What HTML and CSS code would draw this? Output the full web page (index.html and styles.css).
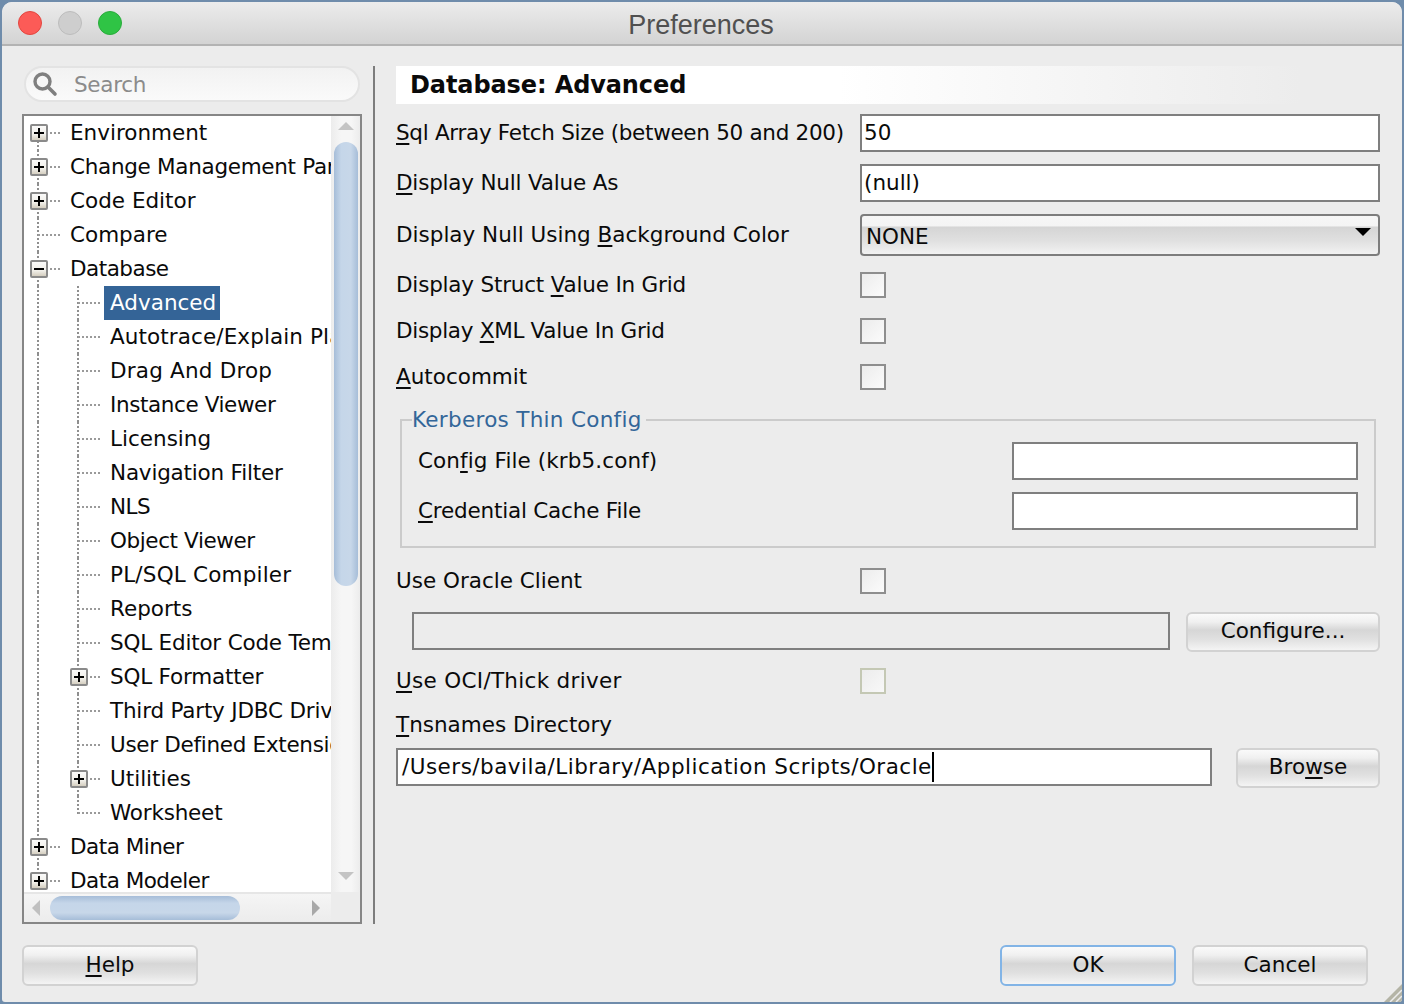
FILE: index.html
```html
<!DOCTYPE html>
<html lang="en">
<head>
<meta charset="utf-8">
<title>Preferences</title>
<link rel="stylesheet" href="styles.css">
</head>
<body>
<svg class="defs" width="0" height="0" aria-hidden="true">
  <defs>
    <linearGradient id="boxfill" x1="0" y1="0" x2="0" y2="1">
      <stop offset="0" stop-color="#fbfbfb"/><stop offset="0.6" stop-color="#f1efe9"/><stop offset="1" stop-color="#cfc8b8"/>
    </linearGradient>
    <symbol id="plus" viewBox="0 0 18 18">
      <rect x="1" y="1" width="16" height="16" rx="1" fill="url(#boxfill)" stroke="#8a8a8a" stroke-width="2"/>
      <path d="M4 9h10M9 4v10" stroke="#000" stroke-width="2"/>
    </symbol>
    <symbol id="minus" viewBox="0 0 18 18">
      <rect x="1" y="1" width="16" height="16" rx="1" fill="url(#boxfill)" stroke="#8a8a8a" stroke-width="2"/>
      <path d="M4 9h10" stroke="#000" stroke-width="2"/>
    </symbol>
  </defs>
</svg>
<div class="window">
  <header class="titlebar">
    <div class="lights"><span class="light red"></span><span class="light grey"></span><span class="light green"></span></div>
    <div class="title">Preferences</div>
  </header>
  <main class="main">
    <aside class="nav">
      <div class="search">
        <svg class="search-icon" width="26" height="26" viewBox="0 0 26 26"><circle cx="10.5" cy="10.5" r="7.5" fill="#f6f6f6" stroke="#7f7f7f" stroke-width="3.4"/><path d="M16 16l7 7" stroke="#7f7f7f" stroke-width="3.6" stroke-linecap="round"/></svg>
        <span class="search-text ls-3">Search</span>
      </div>
      <div class="tree">
        <div class="tree-view">
          <div class="row root first"><svg class="exp"><use href="#plus"/></svg><span class="node">Environment</span></div>
          <div class="row root"><svg class="exp"><use href="#plus"/></svg><span class="node ls-3">Change Management Parameters</span></div>
          <div class="row root"><svg class="exp"><use href="#plus"/></svg><span class="node">Code Editor</span></div>
          <div class="row root"><span class="node">Compare</span></div>
          <div class="row root"><svg class="exp"><use href="#minus"/></svg><span class="node ls-5">Database</span></div>
          <div class="row sub"><span class="node selected">Advanced</span></div>
          <div class="row sub"><span class="node lp-1">Autotrace/Explain Plan</span></div>
          <div class="row sub"><span class="node lp-2">Drag And Drop</span></div>
          <div class="row sub"><span class="node ls-4">Instance Viewer</span></div>
          <div class="row sub"><span class="node">Licensing</span></div>
          <div class="row sub"><span class="node ls-2">Navigation Filter</span></div>
          <div class="row sub"><span class="node ls-5">NLS</span></div>
          <div class="row sub"><span class="node ls-4">Object Viewer</span></div>
          <div class="row sub"><span class="node lp-2">PL/SQL Compiler</span></div>
          <div class="row sub"><span class="node">Reports</span></div>
          <div class="row sub"><span class="node ls-2">SQL Editor Code Templates</span></div>
          <div class="row sub"><svg class="exp"><use href="#plus"/></svg><span class="node ls-2">SQL Formatter</span></div>
          <div class="row sub"><span class="node ls-2">Third Party JDBC Drivers</span></div>
          <div class="row sub"><span class="node ls-3">User Defined Extensions</span></div>
          <div class="row sub"><svg class="exp"><use href="#plus"/></svg><span class="node">Utilities</span></div>
          <div class="row sub last"><span class="node ls-2">Worksheet</span></div>
          <div class="row root"><svg class="exp"><use href="#plus"/></svg><span class="node ls-5">Data Miner</span></div>
          <div class="row root"><svg class="exp"><use href="#plus"/></svg><span class="node ls-5">Data Modeler</span></div>
        </div>
        <div class="vbar">
          <span class="arrow up"></span>
          <span class="vthumb"></span>
          <span class="arrow down"></span>
        </div>
        <div class="hbar">
          <span class="arrow left"></span>
          <span class="hthumb"></span>
          <span class="arrow right"></span>
        </div>
        <div class="corner"></div>
      </div>
    </aside>
    <div class="divider"></div>
    <section class="panel">
      <h1 class="heading">Database: Advanced</h1>
      <div class="frow r1"><label class="lbl ls-3"><u>S</u>ql Array Fetch Size (between 50 and 200)</label><div class="field">50</div></div>
      <div class="frow r2"><label class="lbl ls-2"><u>D</u>isplay Null Value As</label><div class="field">(null)</div></div>
      <div class="frow r3"><label class="lbl">Display Null Using <u>B</u>ackground Color</label><div class="combo"><span>NONE</span><span class="caret-down"></span></div></div>
      <div class="frow r4"><label class="lbl ls-2">Display Struct <u>V</u>alue In Grid</label><span class="check"></span></div>
      <div class="frow r5"><label class="lbl ls-3">Display <u>X</u>ML Value In Grid</label><span class="check"></span></div>
      <div class="frow r5"><label class="lbl"><u>A</u>utocommit</label><span class="check"></span></div>
      <fieldset class="group">
        <legend class="legend lp-3">Kerberos Thin Config</legend>
        <div class="grow"><label class="glbl lp-1"><span>Con<u>f</u>ig File (krb5.conf)</span></label><div class="field"></div></div>
        <div class="grow g2"><label class="glbl ls-2"><u>C</u>redential Cache File</label><div class="field"></div></div>
      </fieldset>
      <div class="frow r6"><label class="lbl"><span>Use Oracle Client</span></label><span class="check"></span></div>
      <div class="frow r7"><div class="field disabled"></div><button class="btn cfg">Configure...</button></div>
      <div class="frow r8"><label class="lbl lp-3"><u>U</u>se OCI/Thick driver</label><span class="check off"></span></div>
      <div class="tns-label"><u>T</u>nsnames Directory</div>
      <div class="frow r9"><div class="field tns"><span class="typed">/Users/bavila/Library/Application Scripts/Oracle</span></div><button class="btn browse">Bro<u>w</u>se</button></div>
    </section>
  </main>
  <footer class="footer">
    <button class="btn help"><u>H</u>elp</button>
    <div class="actions">
      <button class="btn ok">OK</button>
      <button class="btn cancel">Cancel</button>
    </div>
    <svg class="grip" width="20" height="20" viewBox="0 0 20 20"><path d="M2 20L20 2v18z" fill="#b4b4a6"/><path d="M8 20L20 8M14 20l6-6" stroke="#ececec" stroke-width="1.5"/></svg>
  </footer>
</div>
</body>
</html>
```
FILE: styles.css
```css
* { box-sizing: border-box; }
html, body { margin: 0; padding: 0; }
body {
  width: 1404px;
  height: 1004px;
  padding: 2px;
  overflow: hidden;
  background: #6f8cab;
  font-family: "DejaVu Sans", sans-serif;
  font-size: 21.5px;
  color: #0a0a0a;
}
.defs { position: absolute; }
u { text-decoration-thickness: 2px; text-underline-offset: 3px; }
.ls-5 { letter-spacing: -0.5px; }
.ls-4 { letter-spacing: -0.4px; }
.ls-3 { letter-spacing: -0.3px; }
.ls-2 { letter-spacing: -0.2px; }
.lp-1 { letter-spacing: 0.1px; }
.lp-2 { letter-spacing: 0.2px; }
.lp-3 { letter-spacing: 0.3px; }

.window {
  width: 1400px;
  height: 1000px;
  display: flex;
  flex-direction: column;
  background: #ececec;
  border-radius: 10px 10px 3px 3px;
  overflow: hidden;
}
.titlebar {
  height: 44px;
  flex: none;
  display: flex;
  align-items: center;
  background: linear-gradient(#ececec, #d3d3d3);
  border-bottom: 2px solid #b3b3b3;
}
.lights { width: 160px; flex: none; display: flex; gap: 16px; padding-left: 16px; }
.light { width: 24px; height: 24px; border-radius: 50%; }
.red { background: #fc5b57; border: 1px solid #e2463f; }
.grey { background: #cecece; border: 1px solid #bcbcbc; }
.green { background: #2fc445; border: 1px solid #2aab3c; }
.title {
  flex: 1;
  margin-left: -162px;
  padding-top: 5px;
  text-align: center;
  font-family: "Liberation Sans", sans-serif;
  font-size: 27px;
  color: #505050;
}

.main { display: flex; flex: none; height: 878px; padding: 20px 0 0 20px; }
.nav { width: 340px; flex: none; display: flex; flex-direction: column; }
.search {
  height: 36px;
  margin: 0 2px 12px;
  flex: none;
  display: flex;
  align-items: center;
  padding-left: 6px;
  border: 2px solid #e3e3e3;
  border-radius: 18px;
  background: linear-gradient(#f2f2f2, #fafafa);
}
.search-icon { flex: none; }
.search-text { margin-left: 16px; color: #8b8b8b; }

.tree {
  height: 810px;
  display: grid;
  grid-template-columns: 1fr 29px;
  grid-template-rows: 1fr 30px;
  border: 2px solid #868686;
  background: #fff;
}
.tree-view { overflow: hidden; min-width: 0; }
.row {
  --dots-v: repeating-linear-gradient(#8f8f8f 0 2px, transparent 2px 4px);
  --dots-h: repeating-linear-gradient(90deg, #9a9a9a 0 2px, transparent 2px 4px);
  height: 34px;
  display: flex;
  align-items: center;
  position: relative;
  white-space: nowrap;
}
.root {
  padding-left: 46px;
  background:
    var(--dots-h) 14px 16px / 24px 2px no-repeat,
    var(--dots-v) 13px 0 / 2px 100% no-repeat;
}
.root.first { background: var(--dots-h) 14px 16px / 24px 2px no-repeat, var(--dots-v) 13px 17px / 2px 17px no-repeat; }
.sub {
  padding-left: 80px;
  background:
    var(--dots-h) 54px 16px / 24px 2px no-repeat,
    var(--dots-v) 53px 0 / 2px 100% no-repeat,
    var(--dots-v) 13px 0 / 2px 100% no-repeat;
}
.sub.last {
  background:
    var(--dots-h) 54px 16px / 24px 2px no-repeat,
    var(--dots-v) 53px 0 / 2px 18px no-repeat,
    var(--dots-v) 13px 0 / 2px 100% no-repeat;
}
.exp { position: absolute; width: 18px; height: 18px; left: 6px; top: 8px; }
.sub .exp { left: 46px; }
.node { display: inline-block; height: 34px; line-height: 34px; padding: 0 6px 0 0; }
.sub .node { padding-left: 6px; margin-left: 0; }
.root .node { margin-left: 0; }
.selected { background: #346497; color: #fff; padding-right: 4px; }

.vbar {
  display: flex;
  flex-direction: column;
  align-items: center;
  background: linear-gradient(90deg, #ececec, #f6f6f6 35%, #f6f6f6 70%, #ececec);
}
.vthumb {
  width: 24px;
  height: 444px;
  margin: 12px 0 0;
  border-radius: 12px;
  background: linear-gradient(90deg, #a6bdd8, #c5d6e9 30%, #c7d7e9 70%, #a6bdd8);
}
.arrow { display: block; width: 0; height: 0; flex: none; border-style: solid; border-color: transparent; }
.up { margin-top: 6px; border-width: 0 8px 8px; border-bottom-color: #c4c4c4; }
.down { margin-top: auto; margin-bottom: 12px; border-width: 8px 8px 0; border-top-color: #c4c4c4; }
.hbar {
  display: flex;
  align-items: center;
  padding-left: 8px;
  background: linear-gradient(#f5f5f5, #ececec);
  border-top: 2px solid #e6e6e6;
}
.hthumb {
  width: 190px;
  height: 24px;
  margin-left: 10px;
  border-radius: 12px;
  background: linear-gradient(#a6bdd8, #c5d6e9 30%, #c7d7e9 70%, #a6bdd8);
}
.left { border-width: 8px 8px 8px 0; border-right-color: #c0c0c0; }
.right { margin-left: 72px; border-width: 8px 0 8px 8px; border-left-color: #a8a8a8; }
.corner { background: #ececec; }

.divider { width: 2px; height: 858px; flex: none; margin-left: 11px; background: #7d7d7d; }

.panel { width: 984px; flex: none; margin-left: 21px; }
.heading {
  margin: 0;
  height: 38px;
  padding-left: 14px;
  font-size: 24px;
  letter-spacing: -0.1px;
  line-height: 38px;
  font-weight: bold;
  background: linear-gradient(90deg, #fff 0, #fff 45%, #ececec 92%);
}
.frow { display: flex; align-items: center; }
.r1 { margin-top: 10px; height: 38px; }
.r2 { margin-top: 12px; height: 38px; }
.r3 { margin-top: 12px; height: 42px; }
.r4 { margin-top: 16px; height: 26px; }
.r5 { margin-top: 20px; height: 26px; }
.r6 { margin-top: 20px; height: 26px; }
.r7 { margin-top: 18px; height: 40px; align-items: flex-start; padding-left: 16px; }
.r8 { margin-top: 16px; height: 26px; }
.r9 { margin-top: 8px; height: 40px; align-items: flex-start; }
.lbl { width: 464px; flex: none; white-space: nowrap; margin-bottom: 2px; }
.field {
  flex: 1;
  height: 38px;
  padding-left: 2px;
  line-height: 34px;
  background: #fff;
  border: 2px solid #7f7f7f;
  white-space: nowrap;
}
.combo {
  flex: 1;
  height: 42px;
  display: flex;
  align-items: center;
  justify-content: space-between;
  padding: 2px 7px 0 4px;
  border: 2px solid #7d7d7d;
  border-radius: 4px;
  background: linear-gradient(#f6f6f6 0, #f4f4f4 25%, #d5d5d5 30%, #e0e0e0 65%, #f2f2f2 100%);
}
.caret-down { width: 0; height: 0; margin-bottom: 8px; border-style: solid; border-width: 8px 8px 0; border-color: #000 transparent transparent; }
.check {
  width: 26px;
  height: 26px;
  flex: none;
  border: 2px solid #8e8e8e;
  background: linear-gradient(135deg, #ececec, #fbfbfb);
}
.check.off { border-color: #c4c8b4; background: linear-gradient(135deg, #ececec, #f8f8f8); }

.group {
  margin: 20px 4px 0;
  height: 138px;
  padding: 12px 16px 0 16px;
  border: 2px solid #cbcbcb;
}
.legend { margin-left: -6px; padding: 0 4px 0 0; color: #336699; line-height: 20px; }
.grow { display: flex; align-items: center; height: 38px; }
.g2 { margin-top: 12px; }
.glbl { width: 594px; flex: none; white-space: nowrap; margin-bottom: 2px; }
.disabled { background: #ececec; flex: none; width: 758px; }
.btn {
  font: inherit;
  color: inherit;
  height: 40px;
  padding: 0 0 4px;
  border: 2px solid #d2d2d2;
  border-radius: 6px;
  background: linear-gradient(#fafafa 0, #f0f0f0 22%, #d6d6d6 45%, #e0e0e0 70%, #f4f4f4 100%);
}
.cfg { width: 194px; margin-left: 16px; }
.browse { width: 144px; margin-left: 24px; }
.tns-label { margin-top: 16px; height: 30px; line-height: 30px; }
.tns { flex: none; width: 816px; padding-left: 4px; }
.typed { display: inline-block; height: 30px; border-right: 2px solid #000; line-height: 30px; margin-top: 2px; vertical-align: top; letter-spacing: 0.48px; }

.footer { flex: 1; position: relative; display: flex; justify-content: space-between; padding: 21px 34px 0 20px; }
.footer .btn { width: 176px; height: 41px; padding-bottom: 2px; }
.actions { display: flex; gap: 16px; }
.ok { border-color: #82b4e6; }
.grip { position: absolute; right: 0; bottom: 0; }
```
